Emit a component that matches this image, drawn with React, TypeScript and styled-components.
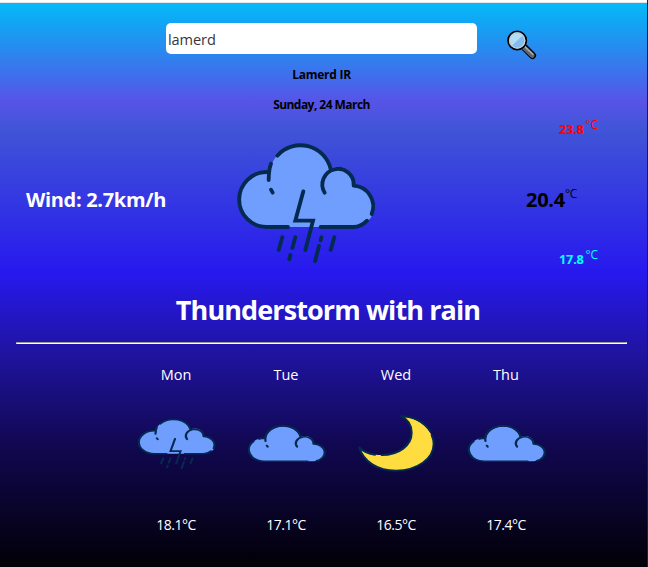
import React from "react";
import styled, { createGlobalStyle } from "styled-components";

const GlobalStyle = createGlobalStyle`
  * { box-sizing: border-box; }
  body {
    margin: 0;
    font-family: "Open Sans", "Noto Sans", sans-serif;
    overflow: hidden;
  }
  h1, h2, h5, p { margin: 0; white-space: nowrap; }
`;

const Frame = styled.div`
  width: 648px;
  height: 567px;
  padding-top: 2px;
  border-right: 1px solid #1a2238;
  background: #fff;
`;

const Page = styled.main`
  height: 565px;
  border-top: 1px solid #dfe6e8;
  display: flex;
  flex-direction: column;
  background: linear-gradient(
    180deg,
    #06baf8 0px,
    #10a6f4 19px,
    #5753e8 99px,
    #4055d6 126px,
    #2719ee 269px,
    #2014a4 346px,
    #110852 440px,
    #020006 564px
  );
`;

const SearchBar = styled.form`
  display: grid;
  grid-template-columns: 311px 30px;
  column-gap: 30px;
  margin: 20px 0 0 166px;
  height: 31px;
`;

const SearchInput = styled.input`
  height: 31px;
  border: 0;
  border-radius: 5px;
  padding: 0 2px;
  background: #fff;
  color: #37363d;
  font: 14.6px "Open Sans", sans-serif;
  letter-spacing: -0.1px;
  outline: none;
`;

const SearchButton = styled.button`
  width: 30px;
  height: 30px;
  margin-top: 7px;
  padding: 0;
  border: 0;
  background: none;
`;

const Place = styled.h5<{ $gap: number; $track: number }>`
  width: 643px;
  margin-top: ${(p) => p.$gap}px;
  text-align: center;
  font-size: 12px;
  font-weight: 700;
  line-height: 16px;
  letter-spacing: ${(p) => p.$track}px;
  color: #000;
`;

const Current = styled.section`
  display: grid;
  grid-template-columns: 194px 170px 1fr;
  height: 158px;
  margin-top: 4px;
  padding: 0 0 0 26px;
`;

const Wind = styled.h2`
  margin-top: 69px;
  color: #fff;
  font-size: 20px;
  line-height: 28px;
  letter-spacing: -0.32px;
`;

const Art = styled.div`
  padding-top: 13px;
  svg { display: block; }
`;

const Temps = styled.div`
  display: grid;
  grid-template-rows: 24px 116px 4px;
  align-items: center;
  align-content: start;
`;

const Temp = styled.div<{ $color: string; $size: number; $left: number; $gap: number; $rise: number }>`
  display: flex;
  align-items: center;
  height: 20px;
  margin-left: ${(p) => p.$left}px;
  gap: ${(p) => p.$gap}px;
  color: ${(p) => p.$color};
  font-size: ${(p) => p.$size}px;
  font-weight: 700;
  letter-spacing: -0.25px;
  sup {
    font-size: 12px;
    font-weight: 500;
    line-height: 12px;
    letter-spacing: -0.3px;
    margin-bottom: ${(p) => p.$rise}px;
  }
`;

const Condition = styled.h1`
  width: 656px;
  margin-top: 16px;
  text-align: center;
  color: #fff;
  font-size: 27px;
  line-height: 38px;
  letter-spacing: -0.9px;
`;

const Rule = styled.hr`
  width: 611px;
  height: 2px;
  margin: 13px 0 0 16px;
  border: 1px solid #9a9a9a;
  border-bottom-color: #fff;
  border-right-color: #eee;
`;

const Forecast = styled.section`
  display: grid;
  grid-template-columns: repeat(4, 110px);
  margin: 20px 0 0 121px;
`;

const Day = styled.article`
  display: grid;
  grid-template-rows: 22px 128px 22px;
  justify-items: center;
  color: #fff;
  font-size: 14.5px;
  font-weight: 500;
  line-height: 22px;
  svg { display: block; margin-top: 27px; }
`;

const Degrees = styled.p`
  font-size: 14px;
  letter-spacing: -0.5px;
`;

const INK = "#042a50";
const CLOUD =
  "M140 291 A82.5 82.5 0 0 1 140 126 L149 126 A93 93 0 0 1 332 117 A47 47 0 0 1 401 167 A62 62 0 0 1 400 291 Z";

function Storm({ width, height }: { width: number; height: number }) {
  return (
    <svg width={width} height={height} viewBox="0 0 510 435" preserveAspectRatio="none">
      <path d={CLOUD} fill="#709eff" />
      <g fill="none" stroke={INK} strokeWidth="11.5" strokeLinecap="round" strokeLinejoin="round">
        <path d="M204 291 H140 A82.5 82.5 0 0 1 140 126" />
        <path d="M146 150 Q146 121 153 101 M172 77 A93 93 0 0 1 332 117" />
        <path d="M314 188 A47 47 0 1 1 401 167 A62 62 0 0 1 455 252" />
        <path d="M441 272 Q423 291 400 291 H302" />
        <path d="M153 179 L158 188" />
        <path d="M250 184 L226 272 H279 L256 360" strokeLinejoin="miter" />
        <path d="M187 322 L176 360 M226 322 L217 354 M211 375 L208 388 M304 322 L302 331 M297 348 L285 394 M343 322 L332 360" />
      </g>
    </svg>
  );
}

function Cloudy() {
  return (
    <svg width="96" height="61" viewBox="0 0 510 435" preserveAspectRatio="none">
      <g transform="translate(0 53)">
        <path d={CLOUD} fill="#709eff" />
        <g fill="none" stroke={INK} strokeWidth="12" strokeLinecap="round" strokeLinejoin="round">
          <path d="M370 291 H140 A82.5 82.5 0 0 1 82 150" />
          <path d="M112 132 Q125 126 140 126 M146 147 A93 93 0 0 1 332 117" />
          <path d="M314 188 A47 47 0 1 1 401 167 A62 62 0 0 1 418 288" />
          <path d="M153 179 L158 188" />
        </g>
      </g>
    </svg>
  );
}

function Moon() {
  return (
    <svg width="96" height="61" viewBox="24 173 288 183" preserveAspectRatio="none">
      <path
        d="M186 183 C235 186 280 225 281 265 C281 310 232 346 168 346 C112 346 73 319 59 277 C79 293 102 299 125 299 C177 299 215 270 215 232 C215 211 205 194 186 183 Z"
        fill="#ffdc40"
      />
      <g fill="none" stroke={INK} strokeWidth="6" strokeLinecap="round">
        <path d="M275 239 C279 248 281 256 281 265 C281 310 232 346 168 346 C112 346 71 319 57 275 C72 291 88 296 105 298" />
        <path d="M125 299 C177 299 215 270 215 232 C215 209 203 192 182 182 C222 184 254 202 271 228" />
      </g>
    </svg>
  );
}

function Magnifier() {
  return (
    <svg width="30" height="30" viewBox="0 0 30 30">
      <path d="M18 18 L25.5 25.5" stroke="#000" strokeWidth="7" strokeLinecap="round" />
      <path d="M15.5 15.5 L20 20" stroke="#000" strokeWidth="4" />
      <path d="M16 16.5 L25.3 25.7" stroke="#5d656a" strokeWidth="4.6" strokeLinecap="round" />
      <path d="M17 15.9 L26 24.4" stroke="#a4adb0" strokeWidth="1.5" strokeLinecap="round" />
      <circle cx="10.2" cy="10.5" r="9.1" fill="#82bcf0" stroke="#000" strokeWidth="1.8" />
      <path d="M4.8 15.7 A7.4 7.4 0 0 1 15.6 5.5 Z" fill="#b3ddf6" />
      <circle cx="10.2" cy="10.5" r="7.6" fill="none" stroke="#c5cdd0" strokeWidth="1.3" />
    </svg>
  );
}

const days = [
  { name: "Mon", temp: "18.1°C", icon: <Storm width={96} height={61} /> },
  { name: "Tue", temp: "17.1°C", icon: <Cloudy /> },
  { name: "Wed", temp: "16.5°C", icon: <Moon /> },
  { name: "Thu", temp: "17.4°C", icon: <Cloudy /> },
];

export default function App() {
  return (
    <>
      <GlobalStyle />
      <Frame>
        <Page>
          <SearchBar onSubmit={(e) => e.preventDefault()}>
            <SearchInput defaultValue="lamerd" aria-label="City" />
            <SearchButton aria-label="Search">
              <Magnifier />
            </SearchButton>
          </SearchBar>
          <Place $gap={13} $track={-0.25}>Lamerd IR</Place>
          <Place $gap={14} $track={-0.55}>Sunday, 24 March</Place>
          <Current>
            <Wind>Wind: 2.7km/h</Wind>
            <Art>
              <Storm width={170} height={145} />
            </Art>
            <Temps>
              <Temp $color="#ff0000" $size={12.8} $left={169} $gap={2} $rise={8}>
                23.8<sup>°C</sup>
              </Temp>
              <Temp $color="#000000" $size={20} $left={136} $gap={0} $rise={10}>
                20.4<sup>°C</sup>
              </Temp>
              <Temp $color="#00ffff" $size={12.8} $left={169} $gap={2} $rise={8}>
                17.8<sup>°C</sup>
              </Temp>
            </Temps>
          </Current>
          <Condition>Thunderstorm with rain</Condition>
          <Rule />
          <Forecast>
            {days.map((d) => (
              <Day key={d.name}>
                <p>{d.name}</p>
                {d.icon}
                <Degrees>{d.temp}</Degrees>
              </Day>
            ))}
          </Forecast>
        </Page>
      </Frame>
    </>
  );
}
